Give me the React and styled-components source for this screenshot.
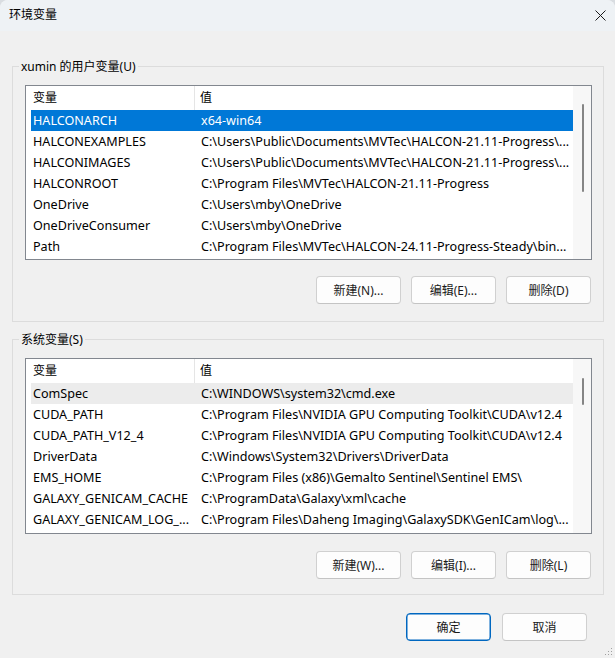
import React from "react";
import styled, { createGlobalStyle, css } from "styled-components";

const GlobalStyle = createGlobalStyle`
  html, body {
    margin: 0;
    padding: 0;
    background: #d9dde1;
  }
  body {
    font-family: "Noto Sans", "Noto Sans CJK SC", sans-serif;
    font-size: 12px;
    color: #000;
  }
`;

const userVars = [
  ["HALCONARCH", "x64-win64"],
  ["HALCONEXAMPLES", "C:\\Users\\Public\\Documents\\MVTec\\HALCON-21.11-Progress\\..."],
  ["HALCONIMAGES", "C:\\Users\\Public\\Documents\\MVTec\\HALCON-21.11-Progress\\..."],
  ["HALCONROOT", "C:\\Program Files\\MVTec\\HALCON-21.11-Progress"],
  ["OneDrive", "C:\\Users\\mby\\OneDrive"],
  ["OneDriveConsumer", "C:\\Users\\mby\\OneDrive"],
  ["Path", "C:\\Program Files\\MVTec\\HALCON-24.11-Progress-Steady\\bin..."],
];

const systemVars = [
  ["ComSpec", "C:\\WINDOWS\\system32\\cmd.exe"],
  ["CUDA_PATH", "C:\\Program Files\\NVIDIA GPU Computing Toolkit\\CUDA\\v12.4"],
  ["CUDA_PATH_V12_4", "C:\\Program Files\\NVIDIA GPU Computing Toolkit\\CUDA\\v12.4"],
  ["DriverData", "C:\\Windows\\System32\\Drivers\\DriverData"],
  ["EMS_HOME", "C:\\Program Files (x86)\\Gemalto Sentinel\\Sentinel EMS\\"],
  ["GALAXY_GENICAM_CACHE", "C:\\ProgramData\\Galaxy\\xml\\cache"],
  ["GALAXY_GENICAM_LOG_...", "C:\\Program Files\\Daheng Imaging\\GalaxySDK\\GenICam\\log\\..."],
];

const VarList = ({ rows, selected, hover, thumbTop, thumbHeight, tall }) => (
  <ListView $tall={tall}>
    <ListBody>
      <HeaderRow>
        <HeadCell $first>变量</HeadCell>
        <HeadCell>值</HeadCell>
      </HeaderRow>
      {rows.map(([name, value], i) => (
        <Row
          key={name}
          $state={i === selected ? "selected" : i === hover ? "hover" : ""}
        >
          <NameCell>{name}</NameCell>
          <ValueCell>{value}</ValueCell>
        </Row>
      ))}
    </ListBody>
    <ScrollTrack>
      <Thumb style={{ marginTop: thumbTop, height: thumbHeight }} />
    </ScrollTrack>
  </ListView>
);

const App = () => {
  return (
    <>
      <GlobalStyle />
      <Window>
        <TitleBar>
          <Title>环境变量</Title>
          <CloseButton>
            <svg width="11" height="11" viewBox="0 0 11 11">
              <path d="M0.5 0.5 L10.5 10.5 M10.5 0.5 L0.5 10.5" stroke="#1a1a1a" strokeWidth="1" />
            </svg>
          </CloseButton>
        </TitleBar>

        <Body>
          <GroupBox>
            <Caption>xumin 的用户变量(U)</Caption>
            <VarList rows={userVars} selected={0} thumbTop={18} thumbHeight={88} />
            <ButtonRow>
              <Button>新建(N)...</Button>
              <Button>编辑(E)...</Button>
              <Button>删除(D)</Button>
            </ButtonRow>
          </GroupBox>

          <GroupBox $second>
            <Caption>系统变量(S)</Caption>
            <VarList rows={systemVars} hover={0} thumbTop={19} thumbHeight={27} tall />
            <ButtonRow $low>
              <Button>新建(W)...</Button>
              <Button>编辑(I)...</Button>
              <Button>删除(L)</Button>
            </ButtonRow>
          </GroupBox>

          <DialogButtons>
            <Button $primary>确定</Button>
            <Button>取消</Button>
          </DialogButtons>
        </Body>

        <Grip>
          <svg width="8" height="8" viewBox="0 0 8 8">
            <g fill="#a0a0a0">
              <rect x="6" y="0" width="1" height="1" />
              <rect x="3" y="3" width="1" height="1" />
              <rect x="6" y="3" width="1" height="1" />
              <rect x="0" y="6" width="1" height="1" />
              <rect x="3" y="6" width="1" height="1" />
              <rect x="6" y="6" width="1" height="1" />
            </g>
          </svg>
        </Grip>
      </Window>
    </>
  );
};

export default App;

const Window = styled.div`
  position: relative;
  width: 615px;
  height: 658px;
  box-sizing: border-box;
  background: #f0f0f0;
  border-radius: 8px 8px 0 0;
  overflow: hidden;
  display: flex;
  flex-direction: column;
`;

const TitleBar = styled.div`
  height: 31px;
  flex: none;
  background: #eef2f5;
  display: flex;
  align-items: center;
  justify-content: space-between;
  padding: 0 9px 0 9px;
`;

const Title = styled.div`
  font-size: 12px;
  line-height: 16px;
  margin-top: -1px;
`;

const CloseButton = styled.div`
  width: 11px;
  height: 11px;
  display: flex;
`;

const Body = styled.div`
  display: flex;
  flex-direction: column;
  padding: 35px 11px 0 12px;
`;

const GroupBox = styled.div`
  display: flex;
  flex-direction: column;
  border: 1px solid #dcdcdc;
  padding: 0 11px 17px 12px;
  ${(p) =>
    p.$second &&
    css`
      margin-top: 17px;
      padding-bottom: 15px;
    `}
`;

const Caption = styled.div`
  align-self: flex-start;
  margin: -8px 0 0 -6px;
  padding: 0 2px;
  line-height: 16px;
  background: #f0f0f0;
`;

const ListView = styled.div`
  margin-top: 10px;
  height: ${(p) => (p.$tall ? 176 : 175)}px;
  box-sizing: border-box;
  border: 1px solid #82878f;
  background: #fff;
  display: flex;
  overflow: hidden;
`;

const ListBody = styled.div`
  flex: 1;
  min-width: 0;
  padding-left: 5px;
`;

const HeaderRow = styled.div`
  display: flex;
  height: 24px;
  align-items: stretch;
`;

const HeadCell = styled.div`
  line-height: 24px;
  box-sizing: border-box;
  ${(p) =>
    p.$first
      ? css`
          width: 164px;
          padding-left: 2px;
          border-right: 1px solid #e5e5e5;
        `
      : css`
          padding-left: 5px;
        `}
`;

const Row = styled.div`
  display: flex;
  height: 21px;
  line-height: 22px;
  font-size: 12.6px;
  white-space: nowrap;
  ${(p) =>
    p.$state === "selected" &&
    css`
      background: #0078d7;
      color: #fff;
    `}
  ${(p) =>
    p.$state === "hover" &&
    css`
      background: #ececec;
    `}
`;

const NameCell = styled.div`
  width: 164px;
  flex: none;
  box-sizing: border-box;
  padding-left: 2px;
  overflow: hidden;
  text-overflow: ellipsis;
`;

const ValueCell = styled.div`
  flex: 1;
  min-width: 0;
  padding-left: 6px;
  overflow: hidden;
  text-overflow: ellipsis;
`;

const ScrollTrack = styled.div`
  width: 18px;
  flex: none;
  background: #f7f7f7;
  display: flex;
  justify-content: center;
  padding-left: 1px;
  box-sizing: border-box;
`;

const Thumb = styled.div`
  width: 2px;
  border-radius: 1px;
  background: #858585;
`;

const ButtonRow = styled.div`
  display: flex;
  justify-content: flex-end;
  gap: 10px;
  margin-top: ${(p) => (p.$low ? 17 : 16)}px;
  padding-right: 1px;
`;

const Button = styled.button`
  width: 85px;
  height: 28px;
  box-sizing: border-box;
  font-family: "Noto Sans", "Noto Sans CJK SC", sans-serif;
  font-size: 12px;
  color: #1a1a1a;
  background: #fdfdfd;
  border: 1px solid #d0d0d0;
  border-bottom-color: #c4c4c4;
  border-radius: 4px;
  padding: 0;
  ${(p) =>
    p.$primary &&
    css`
      border: 1px solid #0067c0;
      box-shadow: inset 0 0 0 0.5px #0067c0;
    `}
`;

const DialogButtons = styled.div`
  display: flex;
  justify-content: flex-end;
  gap: 11px;
  margin-top: 18px;
  padding-right: 17px;
`;

const Grip = styled.div`
  position: absolute;
  right: 2px;
  bottom: 2px;
  width: 8px;
  height: 8px;
  display: flex;
`;
